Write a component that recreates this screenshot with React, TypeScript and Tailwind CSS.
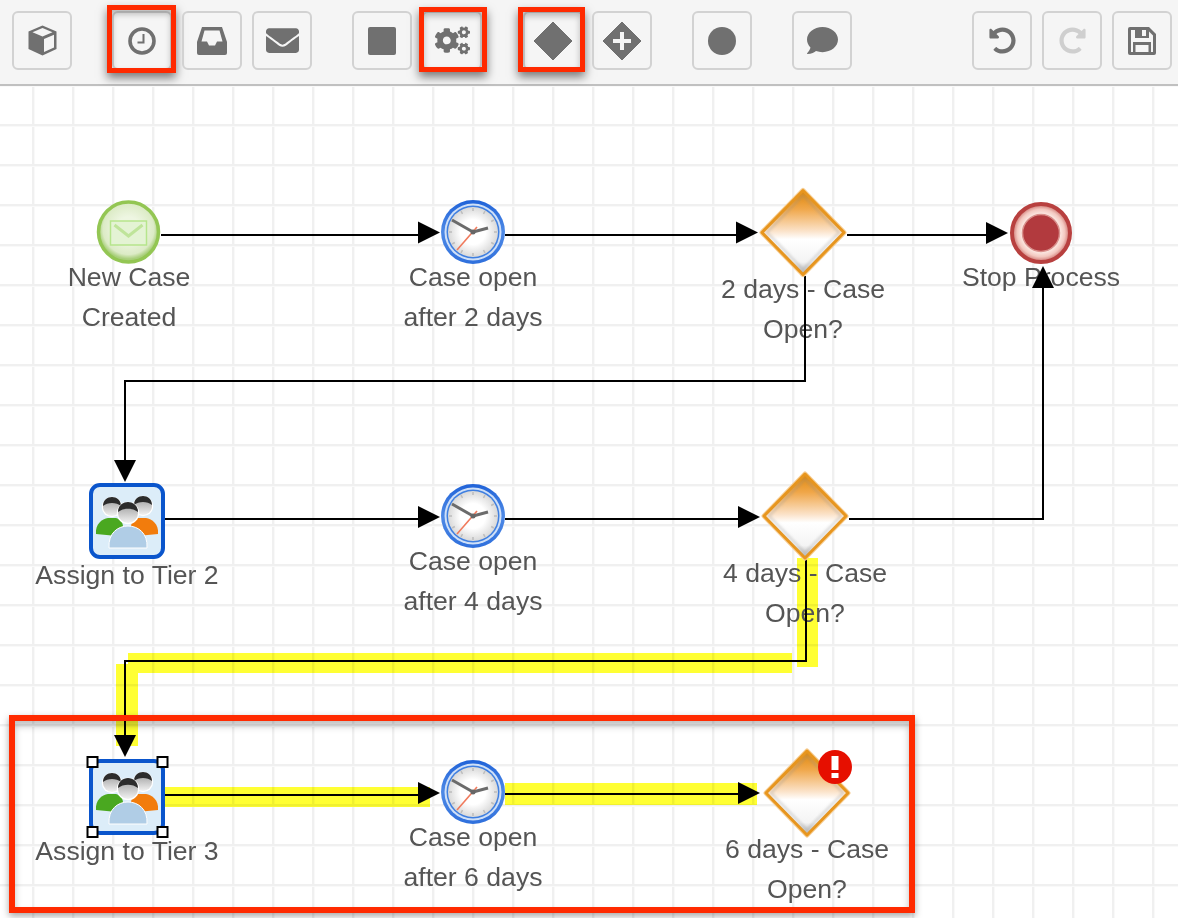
import React from "react";
import { FaCogs, FaEnvelope, FaComment, FaUndoAlt, FaRedoAlt } from "react-icons/fa";

const ICON = "#707070";

function Btn({ className = "", children, mark }: { className?: string; children: React.ReactNode; mark?: string }) {
  return (
    <div className={"relative shrink-0 w-[60px] h-[59px] border-2 border-[#d2d2d2] rounded-[6px] flex items-center justify-center " + className}>
      {children}
      {mark && <div className={"absolute border-[5px] border-[#ff2a00] shadow-[0_5px_9px_rgba(0,0,0,0.5),inset_0_4px_6px_rgba(0,0,0,0.25)] " + mark} />}
    </div>
  );
}

function Label({ className, lines }: { className: string; lines: string[] }) {
  return (
    <div className={"absolute w-[200px] text-center text-[26.6px] leading-[40px] text-[#555555] whitespace-nowrap " + className}>
      {lines.map((l) => (
        <div key={l}>{l}</div>
      ))}
    </div>
  );
}

function ArrowR({ x, y }: { x: number; y: number }) {
  return <polygon points={`${x},${y} ${x - 22},${y - 11} ${x - 22},${y + 11}`} fill="#000" />;
}
function ArrowD({ x, y }: { x: number; y: number }) {
  return <polygon points={`${x},${y} ${x - 11},${y - 22} ${x + 11},${y - 22}`} fill="#000" />;
}
function ArrowU({ x, y }: { x: number; y: number }) {
  return <polygon points={`${x},${y} ${x - 11},${y + 22} ${x + 11},${y + 22}`} fill="#000" />;
}

function Clock({ cx, cy }: { cx: number; cy: number }) {
  const ticks = Array.from({ length: 12 }, (_, i) => (i * Math.PI) / 6);
  return (
    <g transform={`translate(${cx} ${cy})`}>
      <circle r="32" fill="url(#clockRing)" />
      <circle r="28.5" fill="#cfe0f8" />
      <circle r="26.5" fill="#3f7fe0" />
      <circle r="25" fill="url(#clockFace)" />
      {ticks.map((t, i) => (
        <line key={i} x1={Math.cos(t) * 21} y1={Math.sin(t) * 21} x2={Math.cos(t) * 24} y2={Math.sin(t) * 24} stroke="#bdbdbd" strokeWidth="1.5" />
      ))}
      <line x1="4" y1="-5" x2="-16" y2="18" stroke="#f07a5c" strokeWidth="1.6" />
      <line x1="0" y1="0" x2="-21" y2="-12" stroke="#6b6b6b" strokeWidth="3" />
      <line x1="0" y1="0" x2="15" y2="-4" stroke="#6b6b6b" strokeWidth="3" />
      <circle r="2.5" fill="#666" />
    </g>
  );
}

function Gateway({ cx, cy }: { cx: number; cy: number }) {
  const d = `M0,-42 L41,0 L0,42 L-41,0 Z`;
  return (
    <g transform={`translate(${cx} ${cy})`}>
      <path d={d} fill="url(#gateFill)" stroke="#f6cf98" strokeWidth="5" strokeLinejoin="round" />
      <path d={d} fill="url(#gateFill)" stroke="#e8961e" strokeWidth="3" strokeLinejoin="round" />
      <path d="M0,-37 L36,0 L0,37 L-36,0 Z" fill="none" stroke="#8a8a8a" strokeOpacity="0.25" strokeWidth="3" filter="url(#soft)" />
    </g>
  );
}

function Person({ x, y, r }: { x: number; y: number; r: number }) {
  return (
    <g transform={`translate(${x} ${y})`}>
      <circle r={r + 1.2} fill="#ffffff" />
      <circle r={r} fill="url(#headFill)" />
      <path d={`M${-r},${-1} C${-r},${-r * 1.45} ${r},${-r * 1.45} ${r},${-1} C${r * 0.5},${-r * 0.55} ${-r * 0.5},${-r * 0.55} ${-r},${-1} Z`} fill="#2c2c2c" />
    </g>
  );
}

function Task({ cx, cy }: { cx: number; cy: number }) {
  return (
    <g transform={`translate(${cx} ${cy})`}>
      <rect x="-36" y="-36" width="72" height="72" rx="9" fill="#dcedf9" stroke="#0a55cc" strokeWidth="4" />
      <path d="M-31,13 C-32,3 -25,-2 -19,-3 L-11,-3 C-7,-2 -4,1 -4,6 L-10,15 Z" fill="#4aa820" />
      <path d="M31,13 C32,3 25,-2 19,-3 L11,-3 C7,-2 4,1 4,6 L10,15 Z" fill="#f27c0c" />
      <Person x={-15} y={-14} r={9} />
      <Person x={16} y={-15} r={9} />
      <path d="M-18,27 C-19,12 -9,5 1,5 C11,5 21,12 20,27 Z" fill="#b0cde6" stroke="#ffffff" strokeWidth="1" />
      <Person x={1} y={-8} r={10} />
    </g>
  );
}

export default function App() {
  return (
    <div className="relative w-[1178px] h-[918px] overflow-hidden flex flex-col bg-white font-['Liberation_Sans',Arial,sans-serif]">
      <div className="h-[86px] shrink-0 flex items-start pt-[11px] pl-3 bg-[#f5f5f5] border-b-2 border-[#c0c0c0]">
        <Btn>
          <svg width="31" height="31" viewBox="0 0 31 31">
            <path d="M15.5,0.5 L29.5,6.5 V24 L15.5,30.5 L1.5,24 V6.5 Z" fill={ICON} />
            <path d="M15.5,3 L25.5,7.3 L15.5,11.5 L5.5,7.3 Z" fill="#f5f5f5" />
            <path d="M17,14 L27,9.8 V22.5 L17,27 Z" fill="#f5f5f5" />
          </svg>
        </Btn>
        <Btn className="ml-[40px]" mark="-left-[7px] -right-[6px] -top-[8px] -bottom-[5px]">
          <svg width="28" height="28" viewBox="0 0 28 28">
            <circle cx="14" cy="14" r="12" fill="none" stroke={ICON} strokeWidth="3.6" />
            <path d="M15.5,7 V15.5 H9.5" fill="none" stroke={ICON} strokeWidth="2" />
          </svg>
        </Btn>
        <Btn className="ml-[10px]">
          <svg width="30" height="28" viewBox="0 0 30 28">
            <path d="M5,0 H25 L30,15 V26 a2,2 0 0 1 -2,2 H2 a2,2 0 0 1 -2,-2 V15 Z" fill={ICON} />
            <path d="M7.5,3.5 H22.5 L25.5,14.5 H20 L18,18.5 H12 L10,14.5 H4.5 Z" fill="#f5f5f5" />
          </svg>
        </Btn>
        <Btn className="ml-[10px]">
          <FaEnvelope size={33} color={ICON} />
        </Btn>
        <Btn className="ml-[40px]">
          <div className="w-[28px] h-[28px] rounded-[2px] bg-[#707070]" />
        </Btn>
        <Btn className="ml-[10px]" mark="-left-[5px] -right-[7px] -top-[6px] -bottom-[4px]">
          <FaCogs size={35} color={ICON} />
        </Btn>
        <Btn className="ml-[41px]" mark="-left-[7px] -right-[4px] -top-[6px] -bottom-[4px]">
          <svg width="40" height="40" viewBox="0 0 40 40">
            <path d="M20,1 L39,20 L20,39 L1,20 Z" fill={ICON} stroke={ICON} strokeWidth="1" strokeLinejoin="round" />
          </svg>
        </Btn>
        <Btn className="ml-[9px]">
          <svg width="40" height="40" viewBox="0 0 40 40">
            <path d="M20,1 L39,20 L20,39 L1,20 Z" fill={ICON} stroke={ICON} strokeWidth="1" strokeLinejoin="round" />
            <path d="M18,11 H22 V18 H29 V22 H22 V29 H18 V22 H11 V18 H18 Z" fill="#f5f5f5" />
          </svg>
        </Btn>
        <Btn className="ml-[40px]">
          <div className="w-[28px] h-[28px] rounded-full bg-[#707070]" />
        </Btn>
        <Btn className="ml-[40px]">
          <FaComment size={31} color={ICON} />
        </Btn>
        <Btn className="ml-[120px]">
          <FaUndoAlt size={27} color={ICON} />
        </Btn>
        <Btn className="ml-[10px]">
          <FaRedoAlt size={27} color="#cfcfcf" />
        </Btn>
        <Btn className="ml-[10px]">
          <svg width="28" height="28" viewBox="0 0 28 28">
            <path d="M2,0 H21 L28,7 V26 a2,2 0 0 1 -2,2 H2 a2,2 0 0 1 -2,-2 V2 a2,2 0 0 1 2,-2 Z" fill={ICON} />
            <path d="M3,3 H7 V11 H21 V4.5 L25,8.5 V25 H23 V15 H5 V25 H3 Z" fill="#f5f5f5" />
            <rect x="7.5" y="18" width="13" height="7" fill="#f5f5f5" />
            <rect x="14" y="3" width="4" height="6" fill="#f5f5f5" />
          </svg>
        </Btn>
      </div>

      <div className="relative flex-1 bg-white bg-[linear-gradient(#f0f0f0_2px,#f9f9f9_2px,#f9f9f9_3px,transparent_3px),linear-gradient(90deg,#f0f0f0_2px,#f9f9f9_2px,#f9f9f9_3px,transparent_3px)] bg-size-[40px_40px] bg-position-[32px_38px]">
        <svg className="absolute inset-0 mix-blend-multiply" width="1178" height="832" viewBox="0 86 1178 832">
          <rect x="797" y="558" width="21" height="109" fill="#ffff33" />
          <rect x="128" y="653" width="664" height="20" fill="#ffff33" />
          <rect x="116" y="664" width="22" height="82" fill="#ffff33" />
          <rect x="165" y="787" width="265" height="20" fill="#ffff33" />
          <rect x="505" y="783" width="252" height="22" fill="#ffff33" />
        </svg>

        <Label className="left-[29px] top-[171px]" lines={["New Case", "Created"]} />
        <Label className="left-[373px] top-[171px]" lines={["Case open", "after 2 days"]} />
        <Label className="left-[703px] top-[183px]" lines={["2 days - Case", "Open?"]} />
        <Label className="left-[941px] top-[171px]" lines={["Stop Process"]} />
        <Label className="left-[27px] top-[469px]" lines={["Assign to Tier 2"]} />
        <Label className="left-[373px] top-[455px]" lines={["Case open", "after 4 days"]} />
        <Label className="left-[705px] top-[467px]" lines={["4 days - Case", "Open?"]} />
        <Label className="left-[27px] top-[745px]" lines={["Assign to Tier 3"]} />
        <Label className="left-[373px] top-[731px]" lines={["Case open", "after 6 days"]} />
        <Label className="left-[707px] top-[743px]" lines={["6 days - Case", "Open?"]} />

        <svg className="absolute inset-0" width="1178" height="832" viewBox="0 86 1178 832">
          <defs>
            <linearGradient id="gateFill" x1="0" y1="0" x2="0" y2="1">
              <stop offset="0" stopColor="#de8608" />
              <stop offset="0.22" stopColor="#f0a74a" />
              <stop offset="0.48" stopColor="#fbe2c8" />
              <stop offset="0.58" stopColor="#ffffff" />
              <stop offset="0.85" stopColor="#f4f4f4" />
              <stop offset="1" stopColor="#b5b5b5" />
            </linearGradient>
            <linearGradient id="clockRing" x1="0" y1="0" x2="0" y2="1">
              <stop offset="0" stopColor="#1f62d8" />
              <stop offset="0.5" stopColor="#4f8ae6" />
              <stop offset="1" stopColor="#2e6fdc" />
            </linearGradient>
            <radialGradient id="clockFace">
              <stop offset="0.5" stopColor="#ffffff" />
              <stop offset="1" stopColor="#d9d9d9" />
            </radialGradient>
            <radialGradient id="startFace" cx="0.5" cy="0.45">
              <stop offset="0.4" stopColor="#eef6e2" />
              <stop offset="0.85" stopColor="#dcebc6" />
              <stop offset="1" stopColor="#a9cf7b" />
            </radialGradient>
            <radialGradient id="stopFace">
              <stop offset="0.6" stopColor="#fff3ee" />
              <stop offset="0.82" stopColor="#f3c8c0" />
              <stop offset="1" stopColor="#c96a66" />
            </radialGradient>
            <linearGradient id="headFill" x1="0" y1="0" x2="0" y2="1">
              <stop offset="0" stopColor="#9a9a9a" />
              <stop offset="1" stopColor="#f2f2f2" />
            </linearGradient>
            <filter id="soft" x="-10%" y="-10%" width="120%" height="120%">
              <feGaussianBlur stdDeviation="1.2" />
            </filter>
          </defs>

          <g fill="none" stroke="#000" strokeWidth="2">
            <path d="M161,235 H420" />
            <path d="M505,235 H738" />
            <path d="M847,235 H988" />
            <path d="M805,276 V381 H125 V462" />
            <path d="M165,519 H420" />
            <path d="M505,519 H740" />
            <path d="M849,519 H1043 V270" />
            <path d="M806,558 V661 H125 V740" />
            <path d="M165,795 H420" />
            <path d="M505,794 H740" />
          </g>
          <ArrowR x={440} y={232.5} />
          <ArrowR x={758} y={232.5} />
          <ArrowR x={1008} y={233} />
          <ArrowD x={125} y={482} />
          <ArrowR x={440} y={517} />
          <ArrowR x={760} y={517} />
          <ArrowU x={1043} y={266} />
          <ArrowD x={125} y={757} />
          <ArrowR x={440} y={793} />
          <ArrowR x={760} y={793} />

          <g transform="translate(128.5 232)">
            <circle r="30" fill="url(#startFace)" stroke="#93c653" strokeWidth="3.5" />
            <rect x="-18" y="-11" width="36" height="24" fill="#e4f3d4" stroke="#b6e58c" strokeWidth="1.5" />
            <path d="M-14,-7 L0,4 L14,-7" fill="none" stroke="#bfe49a" strokeWidth="3" />
          </g>

          <Clock cx={473} cy={232} />
          <Clock cx={473} cy={516} />
          <Clock cx={473} cy={792} />

          <Gateway cx={803} cy={232.5} />
          <Gateway cx={805} cy={516} />
          <Gateway cx={807} cy={793} />

          <g transform="translate(1041 233)">
            <circle r="29" fill="url(#stopFace)" stroke="#b8403f" strokeWidth="4" />
            <circle r="18.5" fill="#b23a3e" stroke="#d9908c" strokeWidth="1.5" />
          </g>

          <Task cx={127} cy={521} />
          <Task cx={127} cy={797} />
          <g fill="#fff" stroke="#000" strokeWidth="2">
            <rect x="87.5" y="757" width="10" height="10" />
            <rect x="157.5" y="757" width="10" height="10" />
            <rect x="87.5" y="827" width="10" height="10" />
            <rect x="157.5" y="827" width="10" height="10" />
          </g>

          <g transform="translate(835 767)">
            <circle r="17" fill="#e60f00" />
            <rect x="-3.5" y="-11" width="7" height="14" fill="#fff" />
            <rect x="-3.5" y="6" width="7" height="5" fill="#fff" />
          </g>
        </svg>

        <div className="absolute left-[9px] top-[629px] w-[906px] h-[198px] border-[6px] border-[#ff2a00] shadow-[0_3px_7px_rgba(0,0,0,0.35),inset_0_5px_7px_rgba(0,0,0,0.25)]" />
      </div>
    </div>
  );
}
